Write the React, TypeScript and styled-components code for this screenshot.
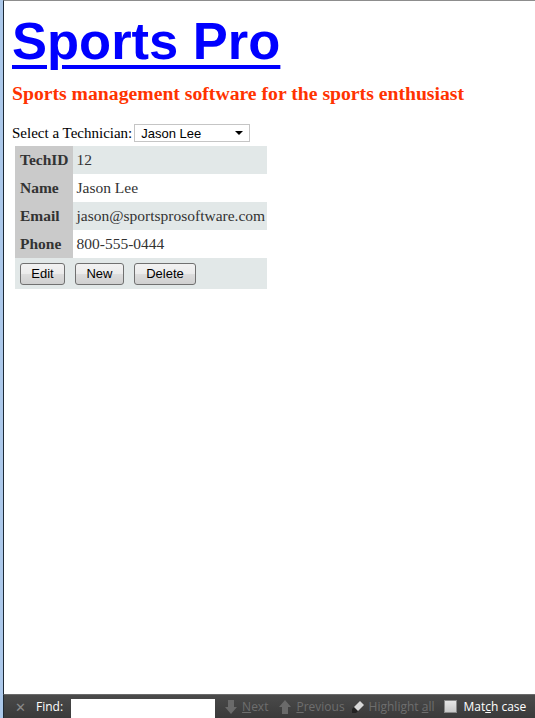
import styled, { createGlobalStyle } from 'styled-components';

const GlobalStyle = createGlobalStyle`
    html, body {
        margin: 0;
        padding: 0;
        background: #ffffff;
    }
    #root {
        height: 100vh;
    }
`

const Window = styled.div`
    display: flex;
    flex-direction: column;
    height: 100vh;
    border-left: 3px solid #acc8ea;
    box-sizing: border-box;
`
const Viewport = styled.div`
    flex: 1;
    display: flex;
    flex-direction: column;
    align-items: flex-start;
    border-left: 1px solid #1e2a36;
    border-top: 1px solid #8d8d8d;
    padding: 0 8px;
    overflow: hidden;
`
const Title = styled.h1`
    margin: 9px 0 0 0;
    font-family: "Liberation Sans", Arial, sans-serif;
    font-size: 52.5px;
    font-weight: bold;
    line-height: 62px;
    a {
        color: #0000ff;
        text-decoration: underline;
        text-decoration-thickness: 4px;
        text-underline-offset: 6px;
    }
`
const Tagline = styled.h2`
    margin: 10px 0 0 0;
    font-family: "Liberation Serif", "Times New Roman", serif;
    font-size: 19.7px;
    font-weight: bold;
    color: #ff3300;
    line-height: 22px;
`
const PickerRow = styled.div`
    display: flex;
    align-items: center;
    gap: 2px;
    margin-top: 20px;
    font-family: "Liberation Serif", "Times New Roman", serif;
    font-size: 15px;
    color: #000;
`
const Picker = styled.div`
    display: flex;
    align-items: center;
    justify-content: space-between;
    width: 116px;
    height: 18px;
    box-sizing: border-box;
    border: 1px solid #c5c5c5;
    padding: 0 6px 0 6px;
    font-family: "Liberation Sans", Arial, sans-serif;
    font-size: 13px;
    color: #000;
`
const Caret = styled.span`
    width: 0;
    height: 0;
    border-left: 4px solid transparent;
    border-right: 4px solid transparent;
    border-top: 4px solid #000;
`
const Table = styled.table`
    margin: 4px 0 0 3px;
    border-collapse: collapse;
    font-family: "Liberation Serif", "Times New Roman", serif;
    font-size: 15.5px;
    color: #333;
`
const Row = styled.tr<{ $shaded: boolean }>`
    height: 28px;
    background: ${(p) => (p.$shaded ? '#e2e8e8' : '#ffffff')};
`
const Label = styled.th`
    background: #cacaca;
    text-align: left;
    font-weight: bold;
    padding: 0 4px 0 5px;
`
const Value = styled.td`
    padding: 0 2px 0 4px;
`
const ButtonCell = styled.td`
    height: 31px;
    padding: 0 5px;
    background: #e2e8e8;
`
const Buttons = styled.div`
    display: flex;
    gap: 10px;
`
const Button = styled.button<{ $width: number }>`
    width: ${(p) => p.$width}px;
    height: 22px;
    border: 1px solid #707070;
    border-radius: 3px;
    background: linear-gradient(#f2f2f2 0%, #ebebeb 50%, #dddddd 51%, #cfcfcf 100%);
    font-family: "Liberation Sans", Arial, sans-serif;
    font-size: 13px;
    color: #000;
    padding: 0;
`
const FindBar = styled.div`
    display: flex;
    align-items: center;
    height: 23px;
    border-left: 1px solid #1e2a36;
    border-top: 1px solid #6a6a6a;
    background: linear-gradient(#4a4a4a, #3a3a3a);
    font-family: "Open Sans", "Liberation Sans", sans-serif;
    font-size: 12px;
    color: #ffffff;
`
const Close = styled.span`
    width: 32px;
    text-align: center;
    color: #8a8a8a;
    font-size: 13px;
`
const FindInput = styled.div`
    align-self: flex-end;
    width: 144px;
    height: 19px;
    margin-left: 8px;
    background: #fff;
`
const Action = styled.span<{ $pad: number }>`
    display: flex;
    align-items: center;
    gap: 4px;
    margin-left: ${(p) => p.$pad}px;
    color: #6e6e6e;
`
const Check = styled.span`
    width: 11px;
    height: 11px;
    margin: 0 6px 0 10px;
    border: 1px solid #8a8a8a;
    background: linear-gradient(#e6e6e6, #c8c8c8);
`

const rows = [
    { label: 'TechID', value: '12' },
    { label: 'Name', value: 'Jason Lee' },
    { label: 'Email', value: 'jason@sportsprosoftware.com' },
    { label: 'Phone', value: '800-555-0444' },
];

export default function App() {
    return (
        <>
            <GlobalStyle />
            <Window>
                <Viewport>
                    <Title><a href="#">Sports Pro</a></Title>
                    <Tagline>Sports management software for the sports enthusiast</Tagline>
                    <PickerRow>
                        Select a Technician:
                        <Picker>Jason Lee<Caret /></Picker>
                    </PickerRow>
                    <Table>
                        <tbody>
                            {rows.map((r, i) => (
                                <Row key={r.label} $shaded={i % 2 === 0}>
                                    <Label>{r.label}</Label>
                                    <Value>{r.value}</Value>
                                </Row>
                            ))}
                            <tr>
                                <ButtonCell colSpan={2}>
                                    <Buttons>
                                        <Button $width={45}>Edit</Button>
                                        <Button $width={49}>New</Button>
                                        <Button $width={62}>Delete</Button>
                                    </Buttons>
                                </ButtonCell>
                            </tr>
                        </tbody>
                    </Table>
                </Viewport>
                <FindBar>
                    <Close>✕</Close>
                    Find:
                    <FindInput />
                    <Action $pad={9}>
                        <svg width="14" height="16" viewBox="0 0 14 16">
                            <path d="M4 1h6v7h3l-6 7-6-7h3z" fill="#6a6a6a" />
                        </svg>
                        <span><u>N</u>ext</span>
                    </Action>
                    <Action $pad={10}>
                        <svg width="14" height="16" viewBox="0 0 14 16">
                            <path d="M7 1l6 7h-3v7H4V8H1z" fill="#6a6a6a" />
                        </svg>
                        <span><u>P</u>revious</span>
                    </Action>
                    <Action $pad={6}>
                        <svg width="14" height="14" viewBox="0 0 14 14">
                            <path d="M9 1l4 4-6 6H3V7z" fill="#d8d8d8" />
                            <path d="M3 7l4 4-2 2H1v-4z" fill="#222" />
                        </svg>
                        <span>Highlight <u>a</u>ll</span>
                    </Action>
                    <Check />
                    <span>Mat<u>c</u>h case</span>
                </FindBar>
            </Window>
        </>
    );
}
